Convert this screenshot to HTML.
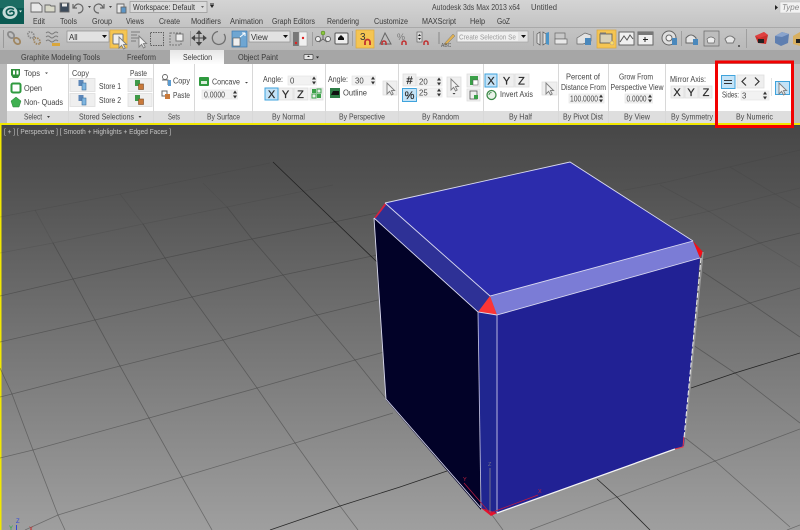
<!DOCTYPE html>
<html><head><meta charset="utf-8"><style>
html,body{margin:0;padding:0;background:#888;width:800px;height:530px;overflow:hidden}
svg{display:block;font-family:"Liberation Sans",sans-serif;filter:blur(.3px)}
text{font-size:7.8px;fill:#444}
.m text{font-size:8px;fill:#3a3a3a}
.l text{fill:#4a4a4a}
.b{fill:#efefef;stroke:#dedede;stroke-width:.8}
.s{fill:#c4e3f7;stroke:#3fa3dc;stroke-width:1}
.f{fill:#f2f2f2;stroke:#e2e2e2;stroke-width:.6}
.g{fill:none;stroke:#3c3c3c;stroke-opacity:.5;stroke-width:.8}
.g2{fill:none;stroke:#3c3c3c;stroke-opacity:.22;stroke-width:.8}
.d{fill:none;stroke:#1c1c1c;stroke-opacity:.9;stroke-width:.8}
.big{font-size:11px;fill:#2c2c2c;text-anchor:middle;stroke:#2c2c2c;stroke-width:.25}
</style></head><body>
<svg width="800" height="530" viewBox="0 0 800 530" xmlns="http://www.w3.org/2000/svg">
<defs>
<linearGradient id="vp" x1="0" y1="0" x2="0" y2="1"><stop offset="0" stop-color="#474747"/><stop offset=".15" stop-color="#525252"/><stop offset="1" stop-color="#9f9f9f"/></linearGradient>
<linearGradient id="tb" x1="0" y1="0" x2="0" y2="1"><stop offset="0" stop-color="#d4d4d4"/><stop offset="1" stop-color="#c2c2c2"/></linearGradient>
<linearGradient id="tl" x1="0" y1="0" x2="0" y2="1"><stop offset="0" stop-color="#c4c4c4"/><stop offset="1" stop-color="#b8b8b8"/></linearGradient>
<linearGradient id="sel" x1="0" y1="0" x2="0" y2="1"><stop offset="0" stop-color="#e6e6e6"/><stop offset="1" stop-color="#ffffff"/></linearGradient>
<g id="sp"><rect x="-3" y="-5" width="6" height="10" fill="#eee"/><path d="M-2 -1L2 -1L0 -4ZM-2 1L2 1L0 4Z" fill="#333"/></g>
<path id="cur" d="M0 0L0 11L2.600 8.400L4.600 12L6.200 11L4.400 7.600L7.600 7.600Z" fill="#f2f2f2" stroke="#7d7d7d" stroke-width=".9"/>
<g id="ch"><ellipse cx="-3" cy="-3" rx="3.600" ry="2.600" transform="rotate(45 -3 -3)" fill="none" stroke="#8a8a8a" stroke-width="1.800"/><ellipse cx="3" cy="3" rx="3.600" ry="2.600" transform="rotate(45 3 3)" fill="none" stroke="#a08660" stroke-width="1.800"/></g>
<g id="stA"><rect x="-3.500" y="-5" width="5" height="6" fill="#5b86b8"/><rect x="0" y="-2" width="4" height="7" fill="#7fb6e0" stroke="#3d6f9c" stroke-width=".6"/></g>
<g id="stB"><rect x="-4" y="-5" width="5" height="6" fill="#3f9a48"/><rect x="-.5" y="-1" width="5" height="5.500" fill="#c9793a" stroke="#7a4c26" stroke-width=".6"/></g>
</defs>

<!-- chrome -->
<rect width="800" height="29" fill="url(#tb)"/>
<rect y="27" width="800" height="24" fill="url(#tl)"/>
<rect y="27" width="800" height="1" fill="#a9a9a9"/>
<rect y="50" width="800" height="14" fill="#a6a6a6"/>
<rect x="170" y="50" width="54" height="15" fill="url(#sel)"/>

<!-- logo -->
<rect width="24" height="24" fill="#0a5a52"/>
<rect width="24" height="8" fill="#2b7d72" opacity=".5"/>
<ellipse cx="10" cy="12.500" rx="7.500" ry="6.500" fill="#cfe3df" opacity=".95"/>
<path d="M14 9.500C10 7 5.500 9.500 6.500 13C7.500 16.500 14 16 14 13C14 11 10.500 10.500 9.500 12.500" fill="none" stroke="#0a5a52" stroke-width="1.600"/>
<path d="M19 10.500l3 0l-1.500 2z" fill="#dfeeea"/>

<!-- QAT -->
<g stroke="#666" fill="#e8e8e8" stroke-width=".9">
<path d="M31 3h8l3 3v6h-11z"/>
<path d="M45 5h5l1 1h4v6h-10z" fill="#d8d8c8"/>
<rect x="60" y="3" width="9" height="9" fill="#3c4a5a"/><rect x="62" y="3.500" width="5" height="3" fill="#e8e8e8" stroke="none"/>
<path d="M74 8a4.500 4.500 0 1 1 4 5M73 4v4h4" fill="none" stroke-width="1.200"/>
<path d="M103 8a4.500 4.500 0 1 0 -4 5M104 4v4h-4" fill="none" stroke-width="1.200"/>
<path d="M117 4h7v9h-7z"/><rect x="121" y="7" width="5" height="6" fill="#5c95c6"/>
</g>
<path d="M88 6l3 0l-1.500 2zM109 6l3 0l-1.500 2z" fill="#444"/>
<rect x="130" y="1.500" width="77" height="11" fill="#dadada" stroke="#9c9c9c" stroke-width=".8"/>
<text x="133" y="10" style="font-size:8.300px;fill:#333" textLength="62" lengthAdjust="spacingAndGlyphs">Workspace: Default</text>
<path d="M201 6l3 0l-1.500 2z" fill="#666"/>
<path d="M210 5h4l-2 3z" fill="#222"/><rect x="210" y="3.500" width="4" height="1" fill="#222"/>
<text x="432" y="10" style="font-size:8.300px" textLength="88" lengthAdjust="spacingAndGlyphs">Autodesk 3ds Max  2013 x64</text>
<text x="531" y="10" style="font-size:8.300px" textLength="26" lengthAdjust="spacingAndGlyphs">Untitled</text>
<path d="M775 5l3 2.500l-3 2.500z" fill="#222"/>
<rect x="780" y="2" width="22" height="11" fill="#f2f2f2" stroke="#c4c4c4" stroke-width=".6"/>
<text x="782" y="10" style="font-size:8px;font-style:italic;fill:#888">Type a</text>

<!-- menu -->
<g class="m">
<text x="33" y="24" textLength="12" lengthAdjust="spacingAndGlyphs">Edit</text><text x="60" y="24" textLength="17" lengthAdjust="spacingAndGlyphs">Tools</text><text x="92" y="24" textLength="20" lengthAdjust="spacingAndGlyphs">Group</text><text x="126" y="24" textLength="18" lengthAdjust="spacingAndGlyphs">Views</text><text x="159" y="24" textLength="21" lengthAdjust="spacingAndGlyphs">Create</text><text x="191" y="24" textLength="30" lengthAdjust="spacingAndGlyphs">Modifiers</text><text x="230" y="24" textLength="33" lengthAdjust="spacingAndGlyphs">Animation</text><text x="272" y="24" textLength="43" lengthAdjust="spacingAndGlyphs">Graph Editors</text><text x="327" y="24" textLength="32" lengthAdjust="spacingAndGlyphs">Rendering</text><text x="374" y="24" textLength="34" lengthAdjust="spacingAndGlyphs">Customize</text><text x="422" y="24" textLength="34" lengthAdjust="spacingAndGlyphs">MAXScript</text><text x="470" y="24" textLength="15" lengthAdjust="spacingAndGlyphs">Help</text><text x="497" y="24" textLength="13" lengthAdjust="spacingAndGlyphs">GoZ</text>
</g>

<!-- toolbar -->
<rect x="3" y="30" width="1" height="18" fill="#999"/>
<use href="#ch" x="14" y="38"/>
<g stroke-dasharray="1.500 1"><use href="#ch" x="34" y="38"/></g>
<path d="M46 33q2 -2 4 0t4 0t4 0M46 37q2 -2 4 0t4 0t4 0M46 41q2 -2 4 0t4 0t4 0" fill="none" stroke="#7a7a7a" stroke-width=".9"/>
<rect x="52" y="43" width="8" height="3" fill="#d9a63b"/>
<rect x="67" y="31" width="42" height="11" fill="#e2e2e2" stroke="#8f8f8f" stroke-width=".7"/>
<text x="69" y="40" style="fill:#333">All</text><path d="M102 35h5l-2.500 3z" fill="#111"/>
<rect x="110" y="30" width="17" height="18" fill="#f5c552" stroke="#dca83c" stroke-width=".7"/>
<rect x="113" y="34" width="10" height="10" rx="1" fill="#efefef" stroke="#777"/>
<use href="#cur" x="119" y="37"/>
<path d="M131 32h9M131 35h6M131 38h8M131 41h5" stroke="#7c7c7c" stroke-width="1"/><use href="#cur" x="139" y="36"/>
<rect x="150.500" y="32.500" width="13" height="13" fill="none" stroke="#5f5f5f" stroke-dasharray="1.500 1"/>
<rect x="170" y="33" width="11" height="12" fill="none" stroke="#777" stroke-dasharray="2 1"/><rect x="176" y="34" width="7" height="7" fill="#eee" stroke="#777"/>
<rect x="190" y="31" width="1" height="15" fill="#9f9f9f"/>
<path d="M199 31v14M192 38h14M199 31l-2 2.500h4zM199 45l-2-2.500h4zM192 38l2.500-2v4zM206 38l-2.500-2v4z" fill="#444" stroke="#444" stroke-width="1.100"/>
<path d="M224 34a6.500 6.500 0 1 1 -6 -2.500" fill="none" stroke="#6f6f6f" stroke-width="1.300"/>
<rect x="232" y="31" width="15" height="16" fill="#6fa6d2" stroke="#3d7bb0" stroke-width=".7"/>
<rect x="233" y="38" width="7" height="8" fill="#eee" stroke="#555" stroke-width=".6"/><path d="M240 37l5-4M245 33h-3M245 33v3" stroke="#fff" fill="none"/>
<rect x="249" y="31" width="41" height="11" fill="#e2e2e2" stroke="#8f8f8f" stroke-width=".7"/>
<text x="251" y="40" style="fill:#333">View</text><path d="M283 35h5l-2.500 3z" fill="#111"/>
<rect x="293" y="32" width="6" height="14" fill="#777"/><rect x="299" y="32" width="8" height="14" fill="#f0f0f0" stroke="#999" stroke-width=".5"/>
<circle cx="303" cy="38" r="1.200" fill="#e02020"/><circle cx="296" cy="43" r="1.200" fill="#e02020"/>
<rect x="312" y="32" width="1" height="14" fill="#9f9f9f"/>
<path d="M323 33v6M319 42l4-3l4 3" stroke="#666" fill="none"/><circle cx="323" cy="33" r="2" fill="#8cc63f" stroke="#4a7a20" stroke-width=".5"/><circle cx="318" cy="39" r="2.500" fill="#eee" stroke="#666"/><circle cx="328" cy="39" r="2.500" fill="#eee" stroke="#666"/>
<rect x="335" y="33" width="13" height="11" rx="1" fill="#eee" stroke="#555"/><path d="M341 35l3 3h-6z" fill="#111"/><rect x="338" y="38" width="6" height="2" fill="#111"/>
<rect x="352" y="31" width="1" height="15" fill="#9f9f9f"/>
<rect x="356" y="30" width="18" height="18" fill="#f5c552" stroke="#dca83c" stroke-width=".7"/>
<text x="360" y="40" style="font-size:10px;fill:#333">3</text>
<path d="M365 45v-3a2.500 2.500 0 0 1 5 0v3" fill="none" stroke="#c03030" stroke-width="1.800"/>
<path d="M380 44l5-11l6 11z" fill="none" stroke="#666"/><path d="M382 45v-2a2 2 0 0 1 4 0v2" fill="none" stroke="#c03030" stroke-width="1.500"/>
<text x="397" y="40" style="font-size:9px;fill:#777">%</text><path d="M402 45v-2a2 2 0 0 1 4 0v2" fill="none" stroke="#c03030" stroke-width="1.500"/>
<rect x="417" y="32" width="5" height="10" fill="#ddd" stroke="#555" stroke-width=".6"/><path d="M418 36l1.500-2l1.500 2zM418 38l1.500 2l1.500-2z" fill="#222"/><path d="M424 45v-2a2 2 0 0 1 4 0v2" fill="none" stroke="#c03030" stroke-width="1.500"/>
<path d="M439 32v12" stroke="#888"/><path d="M444 44l9-10l2 2l-9 9z" fill="#e0b050" stroke="#777" stroke-width=".5"/><text x="441" y="47" style="font-size:5px;fill:#555">ABC</text>
<rect x="457" y="31" width="71" height="11" fill="#e4e4e4" stroke="#a4a4a4" stroke-width=".7"/>
<rect x="458" y="32" width="60" height="9" fill="#f0f0f0"/>
<text x="459" y="39.500" style="fill:#9a9a9a;font-size:7.600px" textLength="57" lengthAdjust="spacingAndGlyphs">Create Selection Se</text><path d="M521 35h5l-2.500 3z" fill="#111"/>
<rect x="533" y="31" width="1" height="15" fill="#9f9f9f"/>
<path d="M537 34l3-2v13l-3-2zM543 32l3 2v9l-3 2z" fill="#e0e0e0" stroke="#555" stroke-width=".7"/><path d="M546 33l3 -1v13l-3 -1z" fill="#4a94c8"/>
<rect x="555" y="33" width="10" height="6" fill="#c8c8c8" stroke="#666" stroke-width=".7"/><rect x="555" y="39" width="12" height="5" fill="#e8e8e8" stroke="#666" stroke-width=".7"/>
<path d="M577 38l8-5l6 2v6l-8 3h-6z" fill="#e2e2e2" stroke="#666" stroke-width=".7"/><rect x="585" y="38" width="6" height="7" fill="#4a88bc"/>
<rect x="597" y="30" width="19" height="18" fill="#f5c552" stroke="#dca83c" stroke-width=".7"/>
<rect x="600" y="34" width="12" height="9" fill="#d9d2b8" stroke="#555" stroke-width=".8"/><rect x="600" y="32.500" width="6" height="2" fill="#777"/><circle cx="612" cy="43" r="2" fill="#f9e06a" stroke="#a88" stroke-width=".4"/>
<rect x="619" y="32" width="15" height="13" fill="#f0f0f0" stroke="#666"/><path d="M620 42l4-6l3 4l3-5l3 4" fill="none" stroke="#555"/>
<rect x="638" y="32" width="15" height="13" fill="#efefef" stroke="#666"/><rect x="638" y="32" width="15" height="3" fill="#777"/><path d="M645 37v5M643 39.500h5" stroke="#222"/>
<circle cx="669" cy="38" r="7" fill="#dedede" stroke="#666"/><circle cx="669" cy="38" r="3" fill="#f3f3f3" stroke="#666"/><rect x="672" y="38" width="5" height="7" fill="#4a88bc"/>
<rect x="681" y="31" width="1" height="15" fill="#9f9f9f"/>
<path d="M686 38q5-6 10 0v5h-10z" fill="#e6e6e6" stroke="#666"/><rect x="693" y="39" width="5" height="6" fill="#4a88bc"/>
<rect x="704" y="31" width="15" height="15" fill="#bdbdbd" stroke="#666" stroke-width=".7"/><path d="M707 39q4-4 8 0l-1 4h-6z" fill="#eee" stroke="#666" stroke-width=".7"/>
<path d="M725 39q5-6 10 0l-2 4h-6z" fill="#e6e6e6" stroke="#777"/><circle cx="739" cy="46" r="1" fill="#444"/>
<rect x="746" y="29" width="1" height="19" fill="#9f9f9f"/>
<path d="M755 36l9-4l4 3l-2 9l-8-1z" fill="#c9302c"/><path d="M755 36l9-4l4 3l-9 3z" fill="#e04040"/><rect x="758" y="39" width="6" height="4" fill="#222"/>
<path d="M775 36l7-4l7 2l-1 9l-7 3l-6-3z" fill="#5f7fb0"/><path d="M775 36l7-4l7 2l-7 3z" fill="#8aa4cc"/>
<path d="M793 36l7-4v14l-7-2z" fill="#d8b060"/><rect x="796" y="39" width="4" height="4" fill="#222"/>

<!-- tabs -->
<g class="m">
<text x="21" y="60" textLength="79" lengthAdjust="spacingAndGlyphs">Graphite Modeling Tools</text><text x="127" y="60" textLength="29" lengthAdjust="spacingAndGlyphs">Freeform</text><text x="183" y="60" textLength="29" lengthAdjust="spacingAndGlyphs">Selection</text><text x="238" y="60" textLength="40" lengthAdjust="spacingAndGlyphs">Object Paint</text>
</g>
<rect x="304" y="54.500" width="9" height="5" rx="1" fill="#e4e4e4" stroke="#444" stroke-width=".7"/><path d="M307 57h3l-1.500-1.500z" fill="#222"/><path d="M316 56.500h3l-1.500 2z" fill="#222"/>

<!-- ribbon -->
<rect x="0" y="64" width="800" height="47" fill="#fff"/>
<rect x="0" y="64" width="7" height="61" fill="#bcbcbc"/>
<rect x="792" y="64" width="8" height="61" fill="#bcbcbc"/>
<rect x="7" y="111" width="785" height="12" fill="#dedede"/>
<g fill="#d8d8d8"><rect x="68" y="64" width="1" height="59"/><rect x="153" y="64" width="1" height="59"/><rect x="194" y="64" width="1" height="59"/><rect x="252" y="64" width="1" height="59"/><rect x="325" y="64" width="1" height="59"/><rect x="398" y="64" width="1" height="59"/><rect x="483" y="64" width="1" height="59"/><rect x="558" y="64" width="1" height="59"/><rect x="608" y="64" width="1" height="59"/><rect x="665" y="64" width="1" height="59"/><rect x="717" y="64" width="1" height="59"/></g>

<!-- select -->
<path d="M11 69h9v6l-2 3h-5l-2-3z" fill="#2f8f3c"/><rect x="13" y="70.500" width="2" height="4" fill="#fff"/><rect x="16.500" y="70.500" width="2" height="4" fill="#fff"/>
<text x="24" y="76" textLength="16" lengthAdjust="spacingAndGlyphs">Tops</text><path d="M45 72.500h3l-1.500 1.500z" fill="#444"/>
<rect x="11.500" y="83.500" width="9" height="9" rx="1.500" fill="#fff" stroke="#2f9a3f" stroke-width="2"/>
<text x="24" y="91" textLength="18" lengthAdjust="spacingAndGlyphs">Open</text>
<path d="M16 97l5 4l-2 6h-6l-2-6z" fill="#3fb050" stroke="#2a8038" stroke-width=".5"/>
<text x="24" y="105" textLength="39" lengthAdjust="spacingAndGlyphs">Non- Quads</text>
<!-- stored -->
<text x="72" y="76" textLength="17" lengthAdjust="spacingAndGlyphs">Copy</text><text x="130" y="76" textLength="17" lengthAdjust="spacingAndGlyphs">Paste</text>
<rect x="70" y="78.500" width="25" height="13" class="b"/><rect x="70" y="93.500" width="25" height="13" class="b"/>
<rect x="128" y="78.500" width="24" height="13" class="b"/><rect x="128" y="93.500" width="24" height="13" class="b"/>
<use href="#stA" x="82" y="85"/><use href="#stA" x="82" y="100"/><use href="#stB" x="139" y="85"/><use href="#stB" x="139" y="100"/>
<text x="99" y="89" textLength="22" lengthAdjust="spacingAndGlyphs">Store 1</text><text x="99" y="103" textLength="22" lengthAdjust="spacingAndGlyphs">Store 2</text>
<!-- sets -->
<g fill="none" stroke="#666" stroke-width=".9"><circle cx="165" cy="77" r="2.500"/><path d="M162 80h6v5"/></g><rect x="168" y="80" width="3" height="6" fill="#5b9bd0"/>
<text x="173" y="83.500" textLength="17" lengthAdjust="spacingAndGlyphs">Copy</text>
<rect x="162" y="91" width="5" height="5" fill="none" stroke="#666"/><rect x="165" y="94" width="5" height="5" fill="#c9793a"/>
<text x="173" y="98" textLength="17" lengthAdjust="spacingAndGlyphs">Paste</text>
<!-- surface -->
<rect x="199" y="77" width="10" height="9" rx="1" fill="#2f9a3f"/><rect x="201" y="81" width="6" height="3" fill="#d8eeda"/>
<text x="212" y="84.500" textLength="28" lengthAdjust="spacingAndGlyphs">Concave</text><path d="M245 82h3l-1.500 1.500z" fill="#444"/>
<rect x="202" y="90" width="30" height="9" class="f"/><text x="204" y="97.500" textLength="21" lengthAdjust="spacingAndGlyphs">0.0000</text><use href="#sp" x="235" y="94.500"/>
<!-- normal -->
<text x="263" y="82" textLength="20" lengthAdjust="spacingAndGlyphs">Angle:</text><rect x="288" y="76" width="23" height="9" class="f"/><text x="290" y="83.500">0</text><use href="#sp" x="314" y="80.500"/>
<rect x="265" y="88" width="13" height="12" class="s"/><text x="271.500" y="98" class="big">X</text>
<rect x="279" y="88" width="14" height="12" class="b"/><text x="285.500" y="98" class="big">Y</text>
<rect x="294" y="88" width="14" height="12" class="b"/><text x="300.500" y="98" class="big">Z</text>
<rect x="310" y="88" width="13" height="12" class="b"/><rect x="312" y="89" width="4" height="4" fill="#3aa048"/><rect x="317" y="89" width="4" height="4" fill="none" stroke="#3aa048"/><rect x="312" y="94" width="4" height="4" fill="none" stroke="#3aa048"/><rect x="317" y="94" width="4" height="4" fill="#3aa048"/>
<!-- perspective -->
<text x="328" y="82" textLength="20" lengthAdjust="spacingAndGlyphs">Angle:</text><rect x="352" y="76" width="22" height="9" class="f"/><text x="355" y="83.500">30</text><use href="#sp" x="373" y="80.500"/>
<rect x="330" y="88" width="10" height="10" fill="#2e7d46"/><path d="M331 95l2-4h6v4z" fill="#111"/>
<text x="343" y="95.500" textLength="24" lengthAdjust="spacingAndGlyphs">Outline</text>
<rect x="383" y="81" width="14" height="14" class="b"/><use href="#cur" x="387" y="83"/>
<!-- random -->
<rect x="403" y="74" width="13" height="12" class="b"/><text x="409.500" y="84" class="big">#</text>
<rect x="402.500" y="88.500" width="14" height="13" class="s"/><text x="409.500" y="99" class="big">%</text>
<rect x="417" y="77" width="25" height="9" class="f"/><text x="419" y="84.500">20</text><use href="#sp" x="439" y="81.500"/>
<rect x="417" y="88" width="25" height="9" class="f"/><text x="419" y="95.500">25</text><use href="#sp" x="439" y="92.500"/>
<rect x="447" y="77" width="14" height="20" class="b"/><use href="#cur" x="451" y="79"/><path d="M452.500 93h3l-1.500 1.500z" fill="#333"/>
<rect x="467" y="74" width="13" height="13" class="b"/><rect x="470" y="76" width="8" height="9" fill="#3aa048"/><rect x="473" y="80" width="5" height="5" fill="#fff" stroke="#555" stroke-width=".5"/>
<rect x="467" y="89" width="13" height="12" class="b"/><rect x="470" y="91" width="7" height="8" fill="none" stroke="#555" stroke-width=".8"/><rect x="474" y="95" width="4" height="4" fill="#3aa048"/>
<!-- half -->
<rect x="485" y="74" width="12" height="13" class="s"/><text x="491" y="84.500" class="big">X</text>
<rect x="499" y="74" width="15" height="13" class="b"/><text x="506.500" y="84.500" class="big">Y</text>
<rect x="515" y="74" width="14" height="13" class="b"/><text x="521.500" y="84.500" class="big">Z</text>
<circle cx="491.500" cy="95" r="4.500" fill="#e8f2e8" stroke="#3c8a48" stroke-width="1.300"/><path d="M489 95a2.500 2.500 0 0 1 2.500-2.500" fill="none" stroke="#3c8a48"/>
<text x="500" y="97" textLength="33" lengthAdjust="spacingAndGlyphs">Invert Axis</text>
<rect x="542" y="82" width="15" height="13" class="b"/><use href="#cur" x="546" y="83"/>
<!-- pivot -->
<text x="566" y="79.500" textLength="34" lengthAdjust="spacingAndGlyphs">Percent of</text>
<text x="561" y="90" textLength="45" lengthAdjust="spacingAndGlyphs">Distance From</text>
<rect x="569" y="94" width="35" height="9" class="f"/><text x="570" y="101.500" textLength="28" lengthAdjust="spacingAndGlyphs">100.0000</text><use href="#sp" x="601" y="98.500"/>
<!-- view -->
<text x="619" y="79.500" textLength="34" lengthAdjust="spacingAndGlyphs">Grow From</text>
<text x="610.500" y="90" textLength="53" lengthAdjust="spacingAndGlyphs">Perspective View</text>
<rect x="625" y="94" width="27" height="9" class="f"/><text x="626.500" y="101.500" textLength="20" lengthAdjust="spacingAndGlyphs">0.0000</text><use href="#sp" x="650" y="98.500"/>
<!-- symmetry -->
<text x="670" y="82" textLength="36" lengthAdjust="spacingAndGlyphs">Mirror Axis:</text>
<rect x="671" y="86" width="13" height="12" class="b"/><rect x="685" y="86" width="13" height="12" class="b"/><rect x="699" y="86" width="13" height="12" class="b"/>
<text x="677" y="96" class="big">X</text><text x="691" y="96" class="big">Y</text><text x="706" y="96" class="big">Z</text>
<!-- numeric -->
<rect x="721.500" y="75.500" width="13.500" height="13" class="s"/><path d="M724 80.500h8M724 83.500h8" stroke="#333" stroke-width="1.100"/>
<rect x="737" y="75" width="27" height="13" class="b"/>
<path d="M746 77.500l-4 4l4 4M755 77.500l4 4l-4 4" fill="none" stroke="#333" stroke-width="1.200"/>
<text x="722" y="97.500" textLength="17" lengthAdjust="spacingAndGlyphs">Sides:</text><rect x="741" y="91" width="28" height="9" class="f"/><text x="742" y="98.500">3</text><use href="#sp" x="765" y="95.500"/>
<rect x="771" y="78" width="1" height="18" fill="#e2e2e2"/>
<rect x="775.500" y="81.500" width="14" height="13" class="s"/><use href="#cur" x="779" y="83"/>
<!-- labels -->
<g class="l">
<text x="24" y="119.500" textLength="18" lengthAdjust="spacingAndGlyphs">Select</text><path d="M47 116h3l-1.500 2z" fill="#444"/>
<text x="79" y="119.500" textLength="55" lengthAdjust="spacingAndGlyphs">Stored Selections</text><path d="M138.500 116h3l-1.500 2z" fill="#444"/>
<text x="168" y="119.500" textLength="12" lengthAdjust="spacingAndGlyphs">Sets</text><text x="207" y="119.500" textLength="33" lengthAdjust="spacingAndGlyphs">By Surface</text><text x="272" y="119.500" textLength="33" lengthAdjust="spacingAndGlyphs">By Normal</text><text x="339" y="119.500" textLength="46" lengthAdjust="spacingAndGlyphs">By Perspective</text><text x="422" y="119.500" textLength="37" lengthAdjust="spacingAndGlyphs">By Random</text><text x="509" y="119.500" textLength="23" lengthAdjust="spacingAndGlyphs">By Half</text><text x="563" y="119.500" textLength="40" lengthAdjust="spacingAndGlyphs">By Pivot Dist</text><text x="624" y="119.500" textLength="26" lengthAdjust="spacingAndGlyphs">By View</text><text x="671" y="119.500" textLength="42" lengthAdjust="spacingAndGlyphs">By Symmetry</text><text x="736" y="119.500" textLength="37" lengthAdjust="spacingAndGlyphs">By Numeric</text>
</g>
<!-- viewport -->
<rect y="123" width="800" height="2" fill="#f2e800"/>
<rect y="125" width="800" height="405" fill="url(#vp)"/>
<rect y="125" width="800" height="1" fill="#3d4658"/>
<rect y="125" width="1.500" height="405" fill="#f2e800"/>
<text x="4" y="134" style="fill:#c4c4c4;font-size:7.500px" textLength="167" lengthAdjust="spacingAndGlyphs">[ + ] [ Perspective ] [ Smooth + Highlights + Edged Faces ]</text>

<!-- grid -->
<g class="g2">
<path d="M0 217L120 194L270 163"/>
<path d="M0 253L53 243L143 224L227 207L333 185"/>
<path d="M615 192L667 182L800 150"/>
<path d="M670 220L710 211L775 194L800 188"/>
<path d="M660 185L710 212L760 243L800 267"/>
<path d="M730 167L775 194L800 208"/>
<path d="M120 194L143 224"/>
<path d="M35 210L53 243"/>
<path d="M203 183L227 207"/>
</g>
<g class="g">
<path d="M0 296L73 279L165 258L252 239L377 213"/>
<path d="M0 342L95 320L192 297L283 275L377 255"/>
<path d="M0 397L12 394L120 366L223 340L317 315L378 300"/>
<path d="M0 458L33 450L149 418L257 388L355 360L384 352"/>
<path d="M25 530L58 515L182 477L295 443L393 413"/>
<path d="M143 224L165 258L192 297L223 340L257 388L295 443L340 506L358 530"/>
<path d="M53 243L73 279L95 320L120 366L149 418L182 477L212 530"/>
<path d="M0 368L12 394L33 450L58 515L65 530"/>
<path d="M227 207L252 239L283 275L317 315L355 360L387 400"/>
<path d="M702 260L760 243L800 233"/>
<path d="M698 318L750 303L800 288"/>
<path d="M530 530L617 497L715 461L800 429"/>
<path d="M787 530L800 525"/>
<path d="M703 272L750 303L800 337"/>
<path d="M693 345L735 373L800 423"/>
<path d="M684 437L715 461L790 527"/>
<path d="M492 515L503 530"/>
</g>
<g class="d">
<path d="M273 162L377 262"/>
<path d="M270 530L340 506L400 487L447 471"/>
<path d="M691 388L735 373L800 353"/>
<path d="M597 479L617 497L650 530"/>
</g>

<!-- axis tripod -->
<text x="16" y="523" style="font-size:6px;fill:#2f46d8">Z</text>
<text x="9" y="530" style="font-size:6px;fill:#1ea83a">Y</text>
<text x="29" y="531" style="font-size:6px;fill:#d02020">X</text>
<rect x="16" y="525" width="1" height="5" fill="#2f46d8"/>

<!-- cube -->
<polygon points="374,218 478,312 481,510 386,400" fill="#020228"/>
<polygon points="478,312 497,315 497,513 491,515 481,508" fill="#202690"/>
<polygon points="497,315 700,258 684,446 497,513" fill="#212194"/>
<polygon points="385,203 570,162 693,241 490,296" fill="#2c2cac"/>
<polygon points="374,218 385,203 490,296 478,312" fill="#2e3196"/>
<polygon points="490,296 693,241 700,258 497,315" fill="#7b7cd6"/>
<polygon points="490,296 478,312 497,315" fill="#fb3535"/>
<polygon points="693,241 703,252 700,258" fill="#f40d18"/>
<polygon points="385,203 374,218 376,218 386,205" fill="#d8243c"/>
<polygon points="481,508 497,513 491,516" fill="#e8102a"/>
<path d="M684 436L683 447L675 449" fill="none" stroke="#ea3a4a" stroke-width="1"/>

<g fill="none" stroke="#dadaf0" stroke-width=".9">
<path d="M385 203L570 162L693 241"/>
<path d="M385 203L490 296L693 241"/>
<path d="M497 315L700 258"/>
<path d="M374 218L478 312L497 315"/>
<path d="M374 218L386 399L481 508"/>
<path d="M478 312L481 508" stroke="#b8b8d8"/>
<path d="M497 315L497 513" stroke="#c8c8e8"/>
</g>
<path d="M703 252L685 438" fill="none" stroke="#999" stroke-width="1.300"/>
<path d="M701 258L684 438" fill="none" stroke="#f0f0f0" stroke-width="1" stroke-dasharray="5 2"/>
<path d="M497 513L675 449" fill="none" stroke="#f4f4f4" stroke-width="1.300"/>
<!-- gizmo -->
<path d="M490 513V468" stroke="#73738c" stroke-width="1" fill="none"/>
<path d="M490 513L464 483" stroke="#b21c40" stroke-width=".8" fill="none"/>
<path d="M490 513L538 495" stroke="#c21c40" stroke-width=".8" fill="none"/>
<text x="488" y="466" style="font-size:5.500px;fill:#73738c">Z</text>
<text x="463" y="481" style="font-size:5.500px;fill:#c0203c">Y</text>
<text x="538" y="493" style="font-size:5.500px;fill:#c0203c">X</text>

<!-- red box -->
<rect x="716.500" y="62" width="76" height="64.500" fill="none" stroke="#f20000" stroke-width="3"/>
</svg>
</body></html>
